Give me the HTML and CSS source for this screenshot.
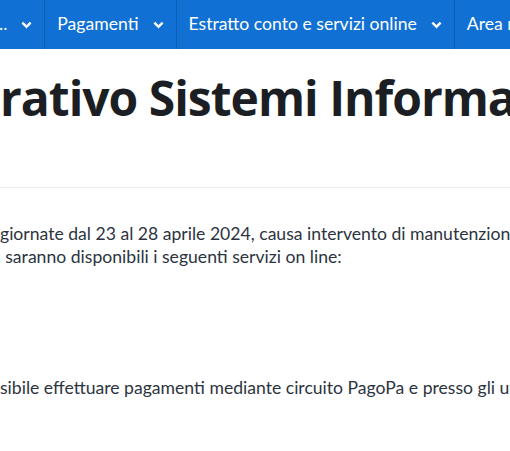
FILE: index.html
```html
<!DOCTYPE html>
<html lang="it">
<head>
<meta charset="UTF-8">
<title>Coordinamento Amministrativo Sistemi Informativi</title>
<link rel="stylesheet" href="styles.css">
</head>
<body>
<nav class="topnav">
  <ul class="menu">
    <li class="menu-item first">
      <span class="menu-label">..</span>
      <svg class="chevron" viewBox="0 0 12 8"><path d="M1.5 1.5 L6 6 L10.5 1.5" /></svg>
    </li>
    <li class="menu-item">
      <span class="menu-label">Pagamenti</span>
      <svg class="chevron" viewBox="0 0 12 8"><path d="M1.5 1.5 L6 6 L10.5 1.5" /></svg>
    </li>
    <li class="menu-item">
      <span class="menu-label">Estratto conto e servizi online</span>
      <svg class="chevron" viewBox="0 0 12 8"><path d="M1.5 1.5 L6 6 L10.5 1.5" /></svg>
    </li>
    <li class="menu-item">
      <span class="menu-label">Area riservata</span>
    </li>
  </ul>
</nav>

<main class="page">
  <!-- titolo della pagina, tagliato dalla finestra -->
  <h1 class="page-title">rativo Sistemi Informativi</h1>
  <hr class="divider">

  <div class="content">
    <p class="notice">giornate dal 23 al 28 aprile 2024, causa intervento di manutenzione<br>
      <span class="cut-link">a</span> saranno disponibili i seguenti servizi on line:</p>

    <p class="notice later">sibile effettuare pagamenti mediante circuito PagoPa e presso gli uffici</p>
  </div>
</main>
</body>
</html>
```

FILE: styles.css
```css
/* pagina intera, niente scroll orizzontale */
html, body {
  margin: 0;
  padding: 0;
  overflow: hidden;
}
body {
  font-family: "Lato", "Open Sans", sans-serif;
  background-color: #fff;
  color: #2c3440;
  white-space: nowrap;
}
/* barra blu del menu */
.topnav {
  background-color: #1170d4;
  height: 49px;
}
.menu {
  list-style: none;
  margin: 0;
  padding: 0;
  display: flex;
  height: 100%;
}
.menu-item {
  display: flex;
  align-items: center;
  gap: 14px;
  padding: 0 12px 0 12px;
  border-left: 1px solid #0c5fb8;
  color: #fff;
  font-size: 17.6px;
}
.menu-item.first {
  border-left: none;
  padding-left: 0;
}
.menu-item.first .menu-label {
  margin-left: -1px;
}
.menu-label {
  position: relative;
  top: -1px;
}
.chevron {
  width: 11px;
  height: 8px;
  fill: none;
  stroke: #fff;
  stroke-width: 2.6;
}
/* titolo grande */
.page-title {
  margin: 0;
  padding-top: 16px;
  height: 122px;
  font-family: "Open Sans", sans-serif;
  font-size: 48px;
  font-weight: bold;
  letter-spacing: -1px;
  color: #1b1f24;
}
.divider {
  border: none;
  border-top: 1px solid #eeeeee;
  margin: 0;
}
.content {
  padding-top: 34px;
}
.notice {
  margin: 0;
  font-size: 17.6px;
  line-height: 23px;
}
.cut-link {
  color: #17a3c9;
  margin-left: -8px;
}
.notice.later {
  margin-top: 108px;
}
```
